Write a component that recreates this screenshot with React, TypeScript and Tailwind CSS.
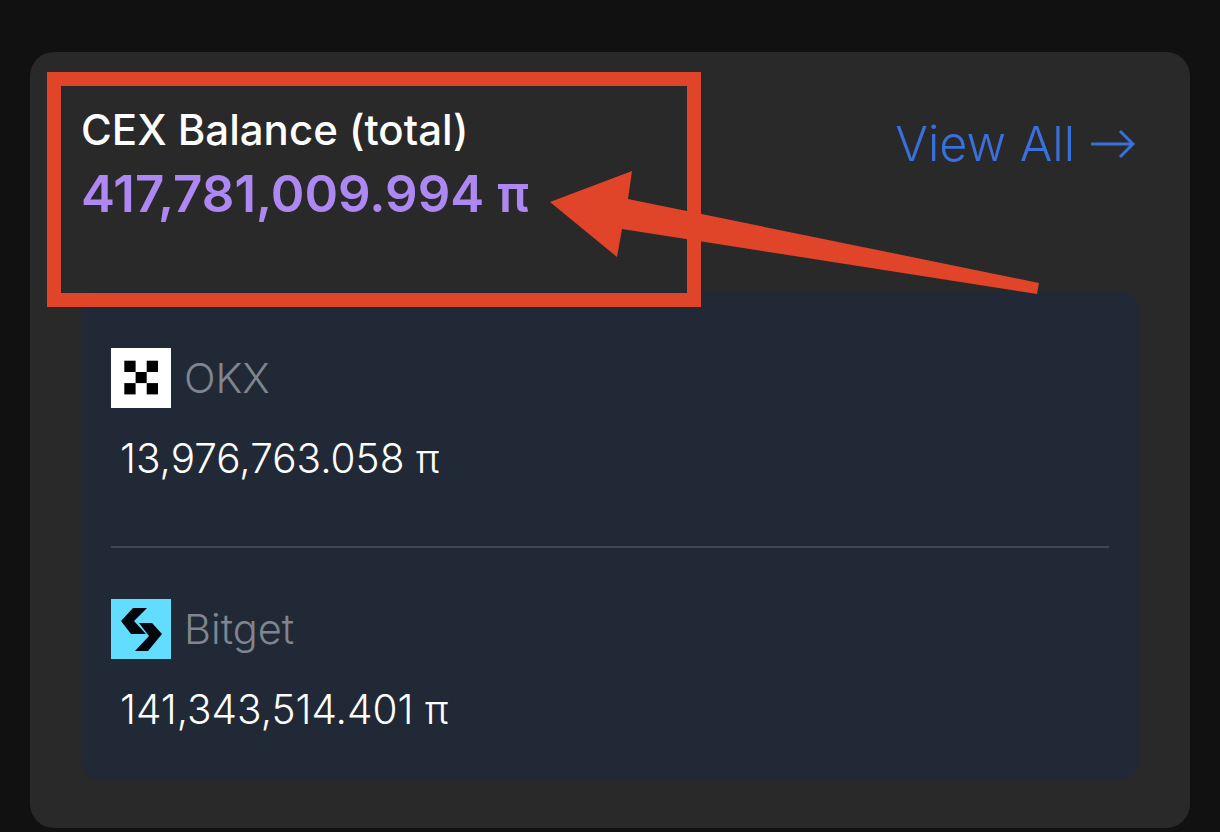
import React from "react";

const font = { fontFamily: 'Inter, "Noto Sans", sans-serif' };

const OkxLogo = () => (
  <svg width="60" height="60" viewBox="0 0 60 60" className="shrink-0">
    <rect width="60" height="60" fill="#ffffff" />
    <rect x="13.3" y="12.7" width="11.3" height="11.3" fill="#000" />
    <rect x="35.7" y="12.7" width="11.3" height="11.3" fill="#000" />
    <rect x="24.6" y="24" width="11.1" height="11.1" fill="#000" />
    <rect x="13.3" y="35.1" width="11.3" height="11.3" fill="#000" />
    <rect x="35.7" y="35.1" width="11.3" height="11.3" fill="#000" />
  </svg>
);

const BitgetLogo = () => (
  <svg width="60" height="60" viewBox="0 0 60 60" className="shrink-0">
    <rect width="60" height="60" fill="#62dcff" />
    <polygon points="22,9 36,9 23,22 35,35 20,35 10,22" fill="#03070d" />
    <polygon points="28,24 41,24 51,35 37,52 24,52 38,37" fill="#03070d" />
  </svg>
);

const rows = [
  { name: "OKX", amount: "13,976,763.058 π", logo: <OkxLogo /> },
  { name: "Bitget", amount: "141,343,514.401 π", logo: <BitgetLogo /> },
];

export default function App() {
  return (
    <div className="relative h-[832px] w-[1220px] overflow-hidden bg-[#111111] pt-[52px] pl-[30px]" style={font}>
      <div className="h-[776px] w-[1160px] rounded-[24px] bg-[#292929]">
        <div className="flex h-[239px] items-start justify-between pl-[51px] pr-[55px]">
          <div className="pt-[53px]">
            <div className="text-[42px] leading-[50px] font-medium text-white">CEX Balance (total)</div>
            <div className="mt-[10px] text-[51px] leading-[58px] font-semibold text-[#ad87f2]">417,781,009.994 π</div>
          </div>
          <div className="flex items-center gap-[16px] pt-[62px] text-[48.5px] leading-[60px] font-light text-[#3a70dc]">
            <span>View All</span>
            <svg width="44" height="30" viewBox="0 0 44 30" fill="none" stroke="#3a70dc" strokeWidth="3">
              <path d="M0 15H42M29 2L42 15L29 28" />
            </svg>
          </div>
        </div>
        <div className="mx-[51px] h-[489px] rounded-[20px] bg-[#212936] px-[30px] pt-[57px]">
          {rows.map((row, i) => (
            <div key={row.name} className={i === 0 ? "h-[200px] border-b-2 border-[#414750]" : "pt-[51px]"}>
              <div className="flex items-center gap-[13px]">
                {row.logo}
                <span className="text-[41.5px] leading-[60px] font-light text-[#808590]">{row.name}</span>
              </div>
              <div className="mt-[20px] pl-[9px] text-[40.5px] leading-[62px] font-light text-white">{row.amount}</div>
            </div>
          ))}
        </div>
      </div>
      {/* annotation */}
      <div className="absolute left-[47px] top-[72px] h-[235px] w-[654px] border-[14px] border-[#e04529]" />
      <svg className="absolute left-0 top-0" width="1220" height="832">
        <polygon points="550,202 632,171 628,199 1039,283 1037,294 622,229 617,257" fill="#e04529" />
      </svg>
    </div>
  );
}
